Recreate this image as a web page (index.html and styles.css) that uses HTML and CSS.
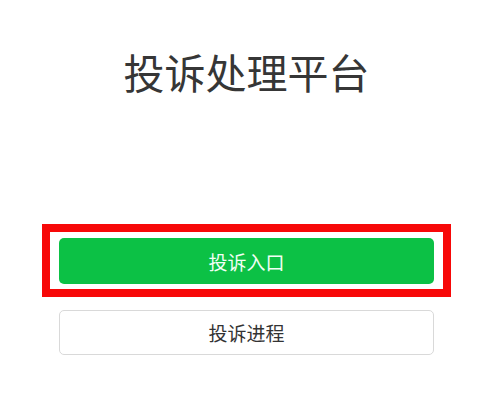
FILE: index.html
```html
<!DOCTYPE html>
<html lang="zh-CN">
<head>
    <meta charset="UTF-8">
    <meta name="viewport" content="width=device-width, initial-scale=1.0">
    <title>投诉处理平台</title>
    <link rel="stylesheet" href="styles.css">
</head>
<body>
    <div class="page">
        <h1 class="title">投诉处理平台</h1>

        <div class="actions">
            <!-- highlighted entry -->
            <div class="highlight">
                <button type="button" class="btn btn-primary">投诉入口</button>
            </div>
            <button type="button" class="btn btn-default">投诉进程</button>
        </div>
    </div>
</body>
</html>
```

FILE: styles.css
```css
/* Basic reset */
* {
    margin: 0;
    padding: 0;
    box-sizing: border-box;
}

body {
    font-family: "Noto Sans CJK SC", "Noto Sans", sans-serif;
    background-color: #fff;
    color: #333;
}

/* Main column */
.page {
    width: 375px;
    margin-left: 59px;
    padding-top: 46px;
}

/* Title */
.title {
    font-size: 41px;
    font-weight: 400;
    line-height: 50px;
    text-align: center;
    color: #363636;
}

/* Buttons */
.actions {
    margin-top: 128px;
}

.highlight {
    margin: 0 -17px 0 -17px;
    border: 8px solid #f70808;
    padding: 6px 9px 5px 9px;
}

.btn {
    display: block;
    width: 375px;
    height: 46px;
    font-family: "Noto Sans CJK SC", sans-serif;
    font-size: 19px;
    border-radius: 5px;
    cursor: pointer;
}

.btn-primary {
    background-color: #0cc145;
    color: #f2fff5;
    border: none;
}

.btn-default {
    margin-top: 13px;
    height: 45px;
    background-color: #fff;
    color: #333;
    border: 1px solid #d9d9d9;
}
```
